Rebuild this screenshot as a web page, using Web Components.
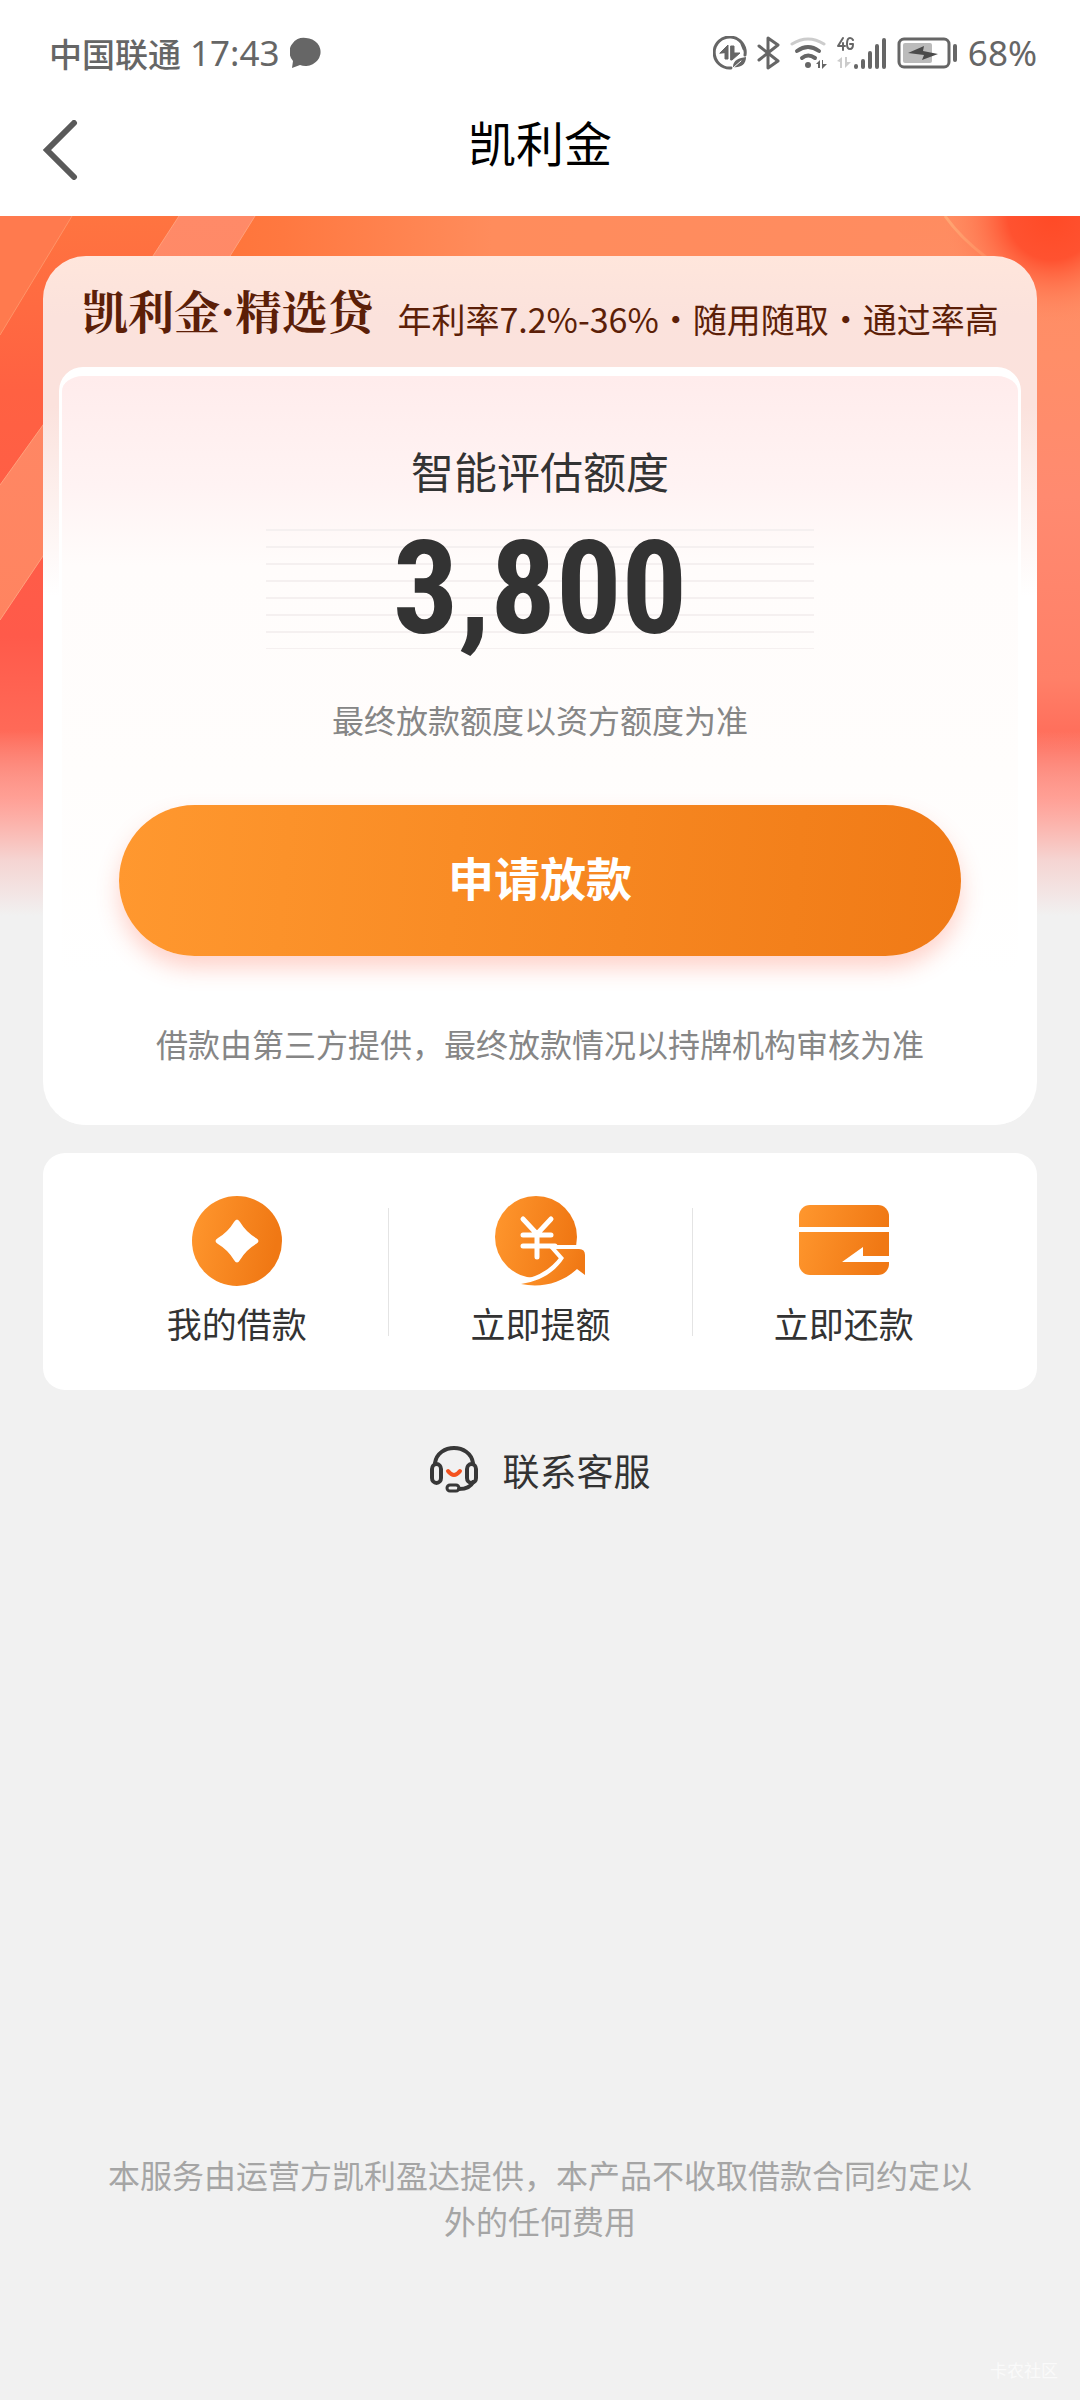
<!DOCTYPE html>
<html lang="zh-CN">
<head>
<meta charset="utf-8">
<meta name="viewport" content="width=device-width, initial-scale=1">
<title>凯利金</title>
<style>
  html, body { margin: 0; }
  body {
    background: #f1f1f1;
    color: #333;
    font-family: "Noto Sans CJK SC", sans-serif;
  }
  loan-page { min-height: 100vh; }
</style>
</head>
<body>
<loan-page>
  <status-bar slot="top" carrier="中国联通" time="17:43" battery="68%"></status-bar>
  <nav-header slot="top">凯利金</nav-header>
  <loan-card>
    <span slot="brand">凯利金·精选贷</span>
    <span slot="tagline">年利率7.2%-36%・随用随取・通过率高</span>
    <span slot="label">智能评估额度</span>
    <span slot="amount">3,800</span>
    <span slot="note">最终放款额度以资方额度为准</span>
    <span slot="action">申请放款</span>
    <span slot="terms">借款由第三方提供，最终放款情况以持牌机构审核为准</span>
  </loan-card>
  <quick-actions>
    <quick-action icon="coin">我的借款</quick-action>
    <quick-action icon="raise">立即提额</quick-action>
    <quick-action icon="repay">立即还款</quick-action>
  </quick-actions>
  <contact-link>联系客服</contact-link>
  <page-footer slot="bottom">本服务由运营方凯利盈达提供，本产品不收取借款合同约定以外的任何费用<span slot="mark">卡农社区</span></page-footer>
</loan-page>

<script>
function define(name, html, setup) {
  const tpl = document.createElement('template');
  tpl.innerHTML = html;
  customElements.define(name, class extends HTMLElement {
    constructor() {
      super();
      this.attachShadow({ mode: 'open' }).appendChild(tpl.content.cloneNode(true));
    }
    connectedCallback() { if (setup) setup(this, this.shadowRoot); }
  });
}

define('loan-page', `
<style>
  :host { display: flex; flex-direction: column; }
  header { background: #fff; }
  main { position: relative; padding: 40px 43px 0; }
  .backdrop { position: absolute; top: 0; left: 0; width: 100%; height: 700px; }
  .content { position: relative; display: flex; flex-direction: column; }
  footer { margin-top: auto; }
</style>
<header><slot name="top"></slot></header>
<main>
  <svg class="backdrop" viewBox="0 0 1080 700" preserveAspectRatio="none" aria-hidden="true">
    <defs>
      <linearGradient id="base" x1="0" y1="0" x2="0" y2="1">
        <stop offset="0" stop-color="#ff7440"/><stop offset=".25" stop-color="#ff6142"/>
        <stop offset=".6" stop-color="#ff5a4a"/><stop offset=".74" stop-color="#ff6a58"/>
      </linearGradient>
      <linearGradient id="right" gradientUnits="userSpaceOnUse" x1="0" y1="0" x2="0" y2="700">
        <stop offset="0" stop-color="#ff8c60"/><stop offset=".2" stop-color="#ff8e68"/>
        <stop offset=".4" stop-color="#ff8a70"/><stop offset=".66" stop-color="#ff8068"/>
        <stop offset=".76" stop-color="#ff6a58"/>
      </linearGradient>
      <linearGradient id="band" x1="0" y1="0" x2="0" y2="1">
        <stop offset="0" stop-color="#ff8a68"/><stop offset="1" stop-color="#ff8460"/>
      </linearGradient>
      <linearGradient id="top" gradientUnits="userSpaceOnUse" x1="174" y1="0" x2="1080" y2="0">
        <stop offset="0" stop-color="#ff7236"/><stop offset=".12" stop-color="#ff7840"/>
        <stop offset=".35" stop-color="#ff8c5c"/><stop offset="1" stop-color="#ff8c62"/>
      </linearGradient>
      <radialGradient id="corner" gradientUnits="userSpaceOnUse" cx="1052" cy="0" r="110">
        <stop offset="0" stop-color="#ff4a26"/><stop offset=".4" stop-color="#ff5230"/>
        <stop offset="1" stop-color="#ff8c64" stop-opacity="0"/>
      </radialGradient>
      <linearGradient id="fade" x1="0" y1="0" x2="0" y2="1">
        <stop offset="0" stop-color="#f1f1f1" stop-opacity="0"/>
        <stop offset=".35" stop-color="#ffc8c4" stop-opacity=".55"/>
        <stop offset=".7" stop-color="#f4dedd" stop-opacity=".92"/>
        <stop offset="1" stop-color="#f1f1f1"/>
      </linearGradient>
    </defs>
    <rect width="1080" height="700" fill="url(#base)"/>
    <path d="M0 0H72L0 119Z" fill="#ff7a4e"/>
    <path d="M72 0L0 119" stroke="#ff9468" stroke-width="1"/>
    <path d="M255 0H1080V100H190Z" fill="url(#top)"/>
    <path d="M900 0H1080V700H900Z" fill="url(#right)"/>
    <path d="M179 0H255L43 340L0 404V269L43 209Z" fill="url(#band)"/>
    <path d="M179 0L43 209L0 269M255 0L43 340L0 404" fill="none" stroke="#ffa07c" stroke-width="1"/>
    <path d="M945 0Q962 24 990 44" fill="none" stroke="#ffa874" stroke-width="3"/>
    <rect x="930" width="150" height="120" fill="url(#corner)"/>
    <rect y="515" width="1080" height="185" fill="url(#fade)"/>
  </svg>
  <div class="content"><slot></slot></div>
</main>
<footer><slot name="bottom"></slot></footer>
`);

define('status-bar', `
<style>
  :host { display: flex; justify-content: space-between; align-items: center; height: 106px;
    padding: 0 43px 0 49px; color: #666; }
  .group { display: flex; align-items: center; }
  .carrier { font-size: 33px; font-weight: 500; line-height: 48px; }
  .num { font: 35px/50px "Noto Sans", sans-serif; }
  .time { margin: 0 11px 0 9px; }
  .icons { gap: 10px; }
  svg { display: block; fill: none; stroke: #666; stroke-linecap: round; stroke-linejoin: round; }
</style>
<div class="group">
  <span class="carrier"></span><span class="num time"></span>
  <svg width="31" height="32" viewBox="0 0 31 32"><path d="M16 1a15 14 0 1 1-6 27L2 31l1-7A14 14 0 0 1 16 1Z" fill="#666" stroke="none"/></svg>
</div>
<div class="group icons">
  <svg width="34" height="34" viewBox="0 0 34 34" stroke-width="3">
    <path d="M32 19A15.500 15.500 0 1 0 18 32M29 8l2 5"/>
    <path d="M7 17L15 9V23H12V17ZM18 10H21V17H27L19 24H18Z" fill="#666" stroke="#666" stroke-width="1"/>
    <path d="M20 31C20 24 26 22 33 21C33 29 27 32 20 31Z" fill="#666" stroke="none"/>
    <path d="M20 32L28 25" stroke="#fff" stroke-width="1"/>
  </svg>
  <svg width="23" height="34" viewBox="0 0 23 34" stroke-width="3"><path d="M2 10L21 25L11 32V2L21 9L2 24"/></svg>
  <svg width="37" height="34" viewBox="0 0 37 34" stroke-width="4">
    <path d="M2 8Q18-2 34 8" stroke="#ccc" stroke-width="3"/>
    <path d="M7 15Q18 7 29 15M12 22Q18 17 25 22"/>
    <circle cx="18" cy="29" r="3" fill="#666" stroke="none"/>
    <path d="M26 28L30 24V32H28V28ZM32 24H33V28H37L32 33Z" fill="#666" stroke="none"/>
  </svg>
  <svg width="50" height="34" viewBox="0 0 50 34" stroke-width="4">
    <path d="M6 2L1 10H8M6 7V14M16 4Q15 2 13 2Q10 2 10 8Q10 13 13 13Q16 13 16 8H13" stroke-width="2"/>
    <path d="M0 25L5 21V32H3V26ZM8 21H10V26H14L8 32Z" fill="#ccc" stroke="none"/>
    <path d="M19 31V30M26 31V25M33 31V17M40 31V10M47 31V4"/>
  </svg>
  <svg width="61" height="32" viewBox="0 0 61 32">
    <rect x="2" y="2" width="50" height="28" rx="5" stroke-width="3"/>
    <rect x="6" y="6" width="29" height="20" rx="2" fill="#bbb" stroke="none"/>
    <path d="M11 16L27 9L26 14L41 17L25 23L27 18Z" fill="#4a4a4a" stroke="none"/>
    <path d="M58 9V23" stroke-width="4"/>
  </svg>
  <span class="num battery"></span>
</div>
`, (el, root) => {
  root.querySelector('.carrier').textContent = el.getAttribute('carrier');
  root.querySelector('.time').textContent = el.getAttribute('time');
  root.querySelector('.battery').textContent = el.getAttribute('battery');
});

define('nav-header', `
<style>
  :host { display: grid; grid-template-columns: 120px 1fr 120px; align-items: start; height: 110px; color: #000; }
  button { display: flex; align-items: center; height: 88px; margin: 0; padding: 0 0 0 42px; border: 0; background: none; }
  h1 { margin: 0; text-align: center; font-size: 48px; font-weight: 400; line-height: 70px; }
</style>
<button type="button" aria-label="返回">
  <svg width="36" height="60" viewBox="0 0 36 60"><path d="M32 3L5 30L32 57" fill="none" stroke="#5a5a5a" stroke-width="6" stroke-linecap="round" stroke-linejoin="miter"/></svg>
</button>
<h1><slot></slot></h1>
`);

define('loan-card', `
<style>
  :host { display: block; border-radius: 43px; overflow: hidden;
    background: linear-gradient(#ffe6dc 0, #fbe2dc 60px, #fbe2dd 150px, #fff 340px); }
  .head { display: flex; align-items: flex-start; gap: 24px; height: 86px; padding: 25px 30px 0 39px;
    color: #5c1f08; white-space: nowrap; }
  h2 { margin: 0; font: 700 46px/56px "Noto Serif CJK SC", "Noto Serif SC", "Noto Sans CJK SC", serif; }
  .tagline { font-size: 34px; line-height: 76px; }
  .body { display: flex; flex-direction: column; align-items: center; margin: 0 16px; padding: 62px 57px 59px;
    border: solid #fff; border-width: 9px 3px 0; border-radius: 24px 24px 0 0; text-align: center;
    background: linear-gradient(#ffecec 0, #fff3f3 110px, #fffcfb 190px, #fffdfc 400px, #fff 600px); }
  .label { font-size: 43px; line-height: 64px; }
  .amount { align-self: stretch; display: flex; justify-content: center; margin: 27px 147px 0; }
  .amount span { flex: 1; font: 700 130px/120px "Roboto Condensed", "Liberation Sans Narrow", Roboto, sans-serif;
    background: repeating-linear-gradient(#f5f0f0 0 2px, transparent 2px 17px); }
  .small { font-size: 32px; line-height: 46px; color: #868686; }
  .note { margin-top: 47px; }
  button { align-self: stretch; height: 151px; margin: 63px 0 64px; padding: 0 0 10px; border: 0; border-radius: 76px;
    color: #fff; font: 700 46px/64px "Noto Sans CJK SC", sans-serif;
    background: linear-gradient(95deg, #ff982f, #f07a16); box-shadow: 0 12px 22px #ff503040; }
</style>
<div class="head"><h2><slot name="brand"></slot></h2><div class="tagline"><slot name="tagline"></slot></div></div>
<div class="body">
  <div class="label"><slot name="label"></slot></div>
  <div class="amount"><span><slot name="amount"></slot></span></div>
  <div class="small note"><slot name="note"></slot></div>
  <button type="button"><slot name="action"></slot></button>
  <div class="small"><slot name="terms"></slot></div>
</div>
`);

define('quick-actions', `
<style>
  :host { display: flex; align-items: center; margin-top: 28px; padding: 0 42px; border-radius: 22px; background: #fff; }
</style>
<slot></slot>
`);

const ICONS = {
  coin: `<circle cx="45" cy="45" r="45" fill="url(#g)"/>
    <path d="M42 26Q45 21 48 26Q54 36 64 42Q69 45 64 48Q54 54 48 64Q45 69 42 64Q36 54 26 48Q21 45 26 42Q36 36 42 26Z" fill="#fff"/>`,
  raise: `<circle cx="41" cy="41" r="41" fill="url(#g)"/>
    <path d="M28 23L42 38L56 23M28 39H56M28 50H60M42 38V61" fill="none" stroke="#fff" stroke-width="5" stroke-linecap="round"/>
    <path d="M61 53H84Q90 53 90 59V79L82 73C66 86 45 91 26 88C45 85 58 77 69 62Z" fill="#fff" stroke="#fff" stroke-width="8"/>
    <path d="M61 53H84Q90 53 90 59V79L82 73C66 88 45 92 26 88C46 85 60 76 69 62Z" fill="url(#g)"/>`,
  repay: `<rect y="9" width="90" height="70" rx="11" fill="url(#g)"/>
    <path d="M0 31H90V36H0ZM43 66L64 51V60H90V66Z" fill="#fff"/>`
};

define('quick-action', `
<style>
  :host { flex: 1; display: flex; align-items: center; }
  :host(:not(:first-child))::before { content: ""; width: 1px; height: 128px; background: #e4e4e4; }
  button { flex: 1; display: flex; flex-direction: column; align-items: center; gap: 12px;
    padding: 43px 0 42px; margin: 0; border: 0; background: none; color: #333;
    font: 35px/50px "Noto Sans CJK SC", sans-serif; }
  svg { display: block; }
</style>
<button type="button">
  <svg width="90" height="90" viewBox="0 0 90 90" aria-hidden="true">
    <defs><linearGradient id="g" x1="0" y1="0" x2="1" y2=".2"><stop offset="0" stop-color="#ff972e"/><stop offset="1" stop-color="#f07814"/></linearGradient></defs>
    <g></g>
  </svg>
  <span><slot></slot></span>
</button>
`, (el, root) => { root.querySelector('g').innerHTML = ICONS[el.getAttribute('icon')]; });

define('contact-link', `
<style>
  :host { display: flex; justify-content: center; margin-top: 54px; }
  a { display: flex; align-items: center; gap: 25px; color: #333; text-decoration: none; font-size: 37px; line-height: 52px; }
  svg { fill: none; stroke: #383838; stroke-width: 3; stroke-linecap: round; }
</style>
<a href="#contact">
  <svg width="48" height="48" viewBox="0 0 48 48" aria-hidden="true">
    <path d="M5 17C8-3 40-3 43 17M43 36Q40 43 29 43" stroke-width="4"/>
    <rect x="2" y="18" width="9" height="19" rx="5" stroke-width="4"/>
    <rect x="37" y="18" width="9" height="19" rx="5" stroke-width="4"/>
    <rect x="17" y="39" width="12" height="6" rx="3"/>
    <path d="M18 25Q24 33 30 25" stroke="#f4521e" stroke-width="4"/>
  </svg>
  <span><slot></slot></span>
</a>
`);

define('page-footer', `
<style>
  :host { display: block; padding: 0 22px 18px; }
  p { max-width: 880px; margin: 0 auto; text-align: center; font-size: 32px; line-height: 46px; color: #a5a5a5; }
  .mark { margin-top: 115px; text-align: right; font-size: 17px; line-height: 24px; color: #fafafa; }
</style>
<p><slot></slot></p>
<div class="mark"><slot name="mark"></slot></div>
`);
</script>
</body>
</html>
